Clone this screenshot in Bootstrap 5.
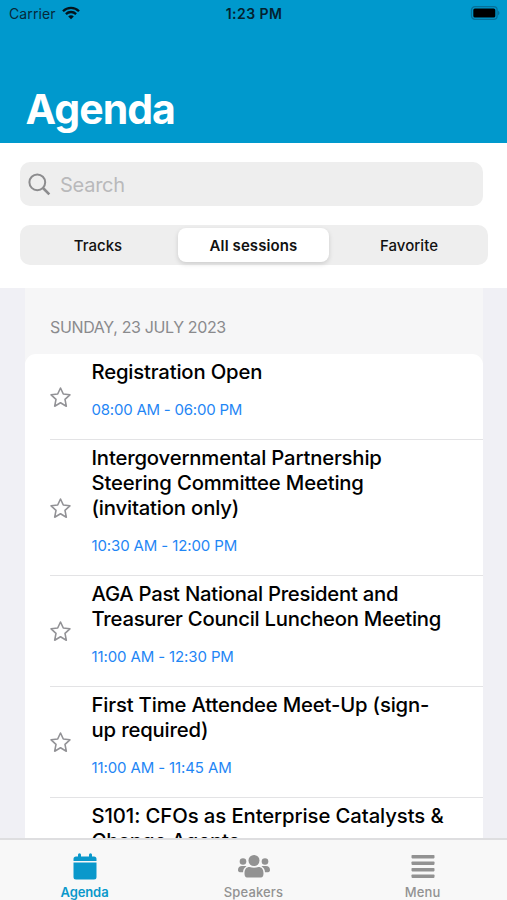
<!DOCTYPE html>
<html lang="en">
<head>
<meta charset="utf-8">
<meta name="viewport" content="width=device-width, initial-scale=1">
<title>Agenda</title>
<link href="https://cdn.jsdelivr.net/npm/bootstrap@5.3.0/dist/css/bootstrap.min.css" rel="stylesheet">
<style>
body{font-family:Inter,"Liberation Sans",sans-serif;background:#f0f0f5;color:#000}
.screen{height:900px;width:507px}
.top{background:#0099cd;height:143px}
.status{height:28px;font-size:14px;line-height:28px;padding:0 7px 0 9px}
.status>*{flex:1 1 0}
.carrier{color:#06293a;letter-spacing:.1px}
.wifi{margin:-2px 0 0 6px}
.battery{margin-top:-2px}
.clock{font-weight:600;font-size:14px;letter-spacing:.45px;color:#032230;margin-left:-1px}
.title{font-size:41px;font-weight:700;line-height:50px;letter-spacing:-.95px;margin:56px 0 0 25.5px}
.tools{height:145px;padding:19px 19px 0 20px}
.search{height:44px;width:463px;border-radius:10px;background:#eee;padding-left:8px;color:#b9b9bb;font-size:20px;letter-spacing:-.25px}
.search span{padding:2px 0 0 9px}
.segment{height:40px;margin-top:19px;background:#eee;border-radius:10px;padding:3px 3px 3px 0}
.segment .btn{font-size:15px;font-weight:500;border:0;padding:1px 0 0;border-radius:8px;line-height:34px;color:#111;flex:0 0 156px}
.segment .btn.on{background:#fff;font-weight:600;flex:0 0 151px;margin:0 2px;box-shadow:0 2px 5px rgba(0,0,0,.14);letter-spacing:.1px}
.segment .favorite{letter-spacing:.05px}
.list-area{margin:0 24px 0 25px;min-height:0}
.day{background:#f6f6f7;height:76px;padding:29px 0 0 25px;font-size:16px;line-height:20px;color:#8a8a8d;letter-spacing:-.36px}
.sessions{background:#fff;border-radius:11px 11px 0 0;margin-top:-10px}
.session{margin-left:25px;border-bottom:1px solid #e3e3e5;padding-top:5px}
.star{width:42px;flex:none;padding-bottom:7px}
.name{font-size:20.3px;line-height:25px;font-weight:500;letter-spacing:-.17px;margin-left:-.5px}
.name.snug{letter-spacing:-.26px}
.name.wide{letter-spacing:-.09px}
.when{font-size:15px;line-height:20px;color:#1f86f5;margin:16px 0 19px -.5px;letter-spacing:-.12px}
.when.early{letter-spacing:-.22px}
.tabs{height:62px;background:#f8f8f8;border-top:2px solid #dedee0;color:#929292;font-size:13px;font-weight:500;line-height:16px;letter-spacing:.15px}
.tabs>div{flex:1 1 0;padding-top:13px}
.tabs svg{display:block;margin:0 auto 4px}
.tabs .current{color:#0a98cb;font-weight:600;letter-spacing:-.1px}
</style>
</head>
<body>
<div class="screen d-flex flex-column overflow-hidden">
  <header class="top flex-shrink-0">
    <div class="status d-flex">
      <div class="carrier d-flex align-items-center"><span>Carrier</span>
        <svg class="wifi" width="18" height="14" viewBox="0 0 18 14" fill="none" stroke="#04141c" stroke-width="2.300"><path d="M1 5.200C5.500.7 12.500.7 17 5.200M3.900 8.100c2.900-2.800 7.300-2.800 10.200 0"/><path d="M9 13.300 6.200 10.400c1.600-1.500 4-1.500 5.600 0z" fill="#04141c" stroke="none"/></svg>
      </div>
      <div class="clock text-center">1:23 PM</div>
      <div class="d-flex align-items-center justify-content-end">
        <svg class="battery" width="30" height="14" viewBox="0 0 30 14"><rect x="1.500" y=".7" width="25.600" height="12.600" rx="3.400" fill="none" stroke="#067099" stroke-width="1.300"/><rect x="3.300" y="2.500" width="22" height="9" rx="1.600" fill="#000"/><path d="M28 4.800c2 .8 2 3.600 0 4.400z" fill="#067099"/></svg>
      </div>
    </div>
    <h1 class="title text-white">Agenda</h1>
  </header>
  <section class="tools bg-white flex-shrink-0">
    <div class="search d-flex align-items-center">
      <svg width="23" height="23" viewBox="0 0 23 23" fill="none" stroke="#8c8c8e" stroke-width="2"><circle cx="9.300" cy="9.300" r="7.900"/><path d="m15 15 6.300 6.300" stroke-width="2.600"/></svg>
      <span>Search</span>
    </div>
    <div class="segment d-flex">
      <button class="btn">Tracks</button>
      <button class="btn on">All sessions</button>
      <button class="btn favorite">Favorite</button>
    </div>
  </section>
  <main class="list-area flex-grow-1 overflow-hidden">
    <div class="day">SUNDAY, 23 JULY 2023</div>
    <div class="sessions">
      <div class="session d-flex align-items-center"><div class="star"><svg width="21" height="21" viewBox="0 0 21 21" fill="none" stroke="#929296" stroke-width="1.600" stroke-linejoin="round"><path d="m10.500 1 2.800 6 6.600.8-4.900 4.500 1.300 6.900-5.800-3.400-5.800 3.400L6 12.300 1.100 7.800 7.700 7z"/></svg></div>
        <div><div class="name">Registration Open</div><div class="when early">08:00 AM - 06:00 PM</div></div></div>
      <div class="session d-flex align-items-center"><div class="star"><svg width="21" height="21" viewBox="0 0 21 21" fill="none" stroke="#929296" stroke-width="1.600" stroke-linejoin="round"><path d="m10.500 1 2.800 6 6.600.8-4.900 4.500 1.300 6.900-5.800-3.400-5.800 3.400L6 12.300 1.100 7.800 7.700 7z"/></svg></div>
        <div><div class="name">Intergovernmental Partnership<br>Steering Committee Meeting<br>(invitation only)</div><div class="when">10:30 AM - 12:00 PM</div></div></div>
      <div class="session d-flex align-items-center"><div class="star"><svg width="21" height="21" viewBox="0 0 21 21" fill="none" stroke="#929296" stroke-width="1.600" stroke-linejoin="round"><path d="m10.500 1 2.800 6 6.600.8-4.900 4.500 1.300 6.900-5.800-3.400-5.800 3.400L6 12.300 1.100 7.800 7.700 7z"/></svg></div>
        <div><div class="name snug">AGA Past National President and<br>Treasurer Council Luncheon Meeting</div><div class="when">11:00 AM - 12:30 PM</div></div></div>
      <div class="session d-flex align-items-center"><div class="star"><svg width="21" height="21" viewBox="0 0 21 21" fill="none" stroke="#929296" stroke-width="1.600" stroke-linejoin="round"><path d="m10.500 1 2.800 6 6.600.8-4.900 4.500 1.300 6.900-5.800-3.400-5.800 3.400L6 12.300 1.100 7.800 7.700 7z"/></svg></div>
        <div><div class="name">First Time Attendee Meet-Up (sign-<br>up required)</div><div class="when">11:00 AM - 11:45 AM</div></div></div>
      <div class="session d-flex"><div class="star"></div>
        <div class="name wide">S101: CFOs as Enterprise Catalysts &amp;<br>Change Agents</div></div>
    </div>
  </main>
  <nav class="tabs d-flex text-center flex-shrink-0">
    <div class="current"><svg width="24" height="27" viewBox="0 0 24 27" fill="currentColor"><path d="M.5 8V6a2.500 2.500 0 0 1 2.500-2.500h2V1.800a1.500 1.500 0 0 1 3 0v1.700h8V1.800a1.500 1.500 0 0 1 3 0v1.700h2A2.500 2.500 0 0 1 23.500 6v2zM.5 9.600h23V24a2.500 2.500 0 0 1-2.500 2.500H3A2.500 2.500 0 0 1 .5 24z"/></svg>Agenda</div>
    <div><svg width="34" height="27" viewBox="0 0 34 27" fill="currentColor"><circle cx="17" cy="7.500" r="5.500"/><circle cx="6" cy="8.500" r="3.300"/><circle cx="28" cy="8.500" r="3.300"/><path d="M7.500 20.500c0-4.500 2-6.500 5-6.500q4.500 1.500 9 0c3 0 5 2 5 6.500 0 2.500-1 4-2.500 4H10c-1.500 0-2.500-1.500-2.500-4zM1 17c0-2.500 1.500-4 4-4h3.500q.6 0 1 .3C7.200 14.800 6.200 16.500 6 19.200H3c-1.300 0-2-.9-2-2.200zM33 17c0-2.500-1.500-4-4-4h-3.500q-.6 0-1 .3C26.800 14.800 27.800 16.500 28 19.200h3c1.300 0 2-.9 2-2.200z"/></svg>Speakers</div>
    <div><svg width="24" height="27" viewBox="0 0 24 27" fill="currentColor"><rect x=".5" y="2" width="23" height="3.400" rx=".8"/><rect x=".5" y="8.500" width="23" height="3.400" rx=".8"/><rect x=".5" y="15" width="23" height="3.400" rx=".8"/><rect x=".5" y="21.500" width="23" height="3.400" rx=".8"/></svg>Menu</div>
  </nav>
</div>
<script src="https://cdn.jsdelivr.net/npm/bootstrap@5.3.0/dist/js/bootstrap.bundle.min.js"></script>
</body>
</html>
